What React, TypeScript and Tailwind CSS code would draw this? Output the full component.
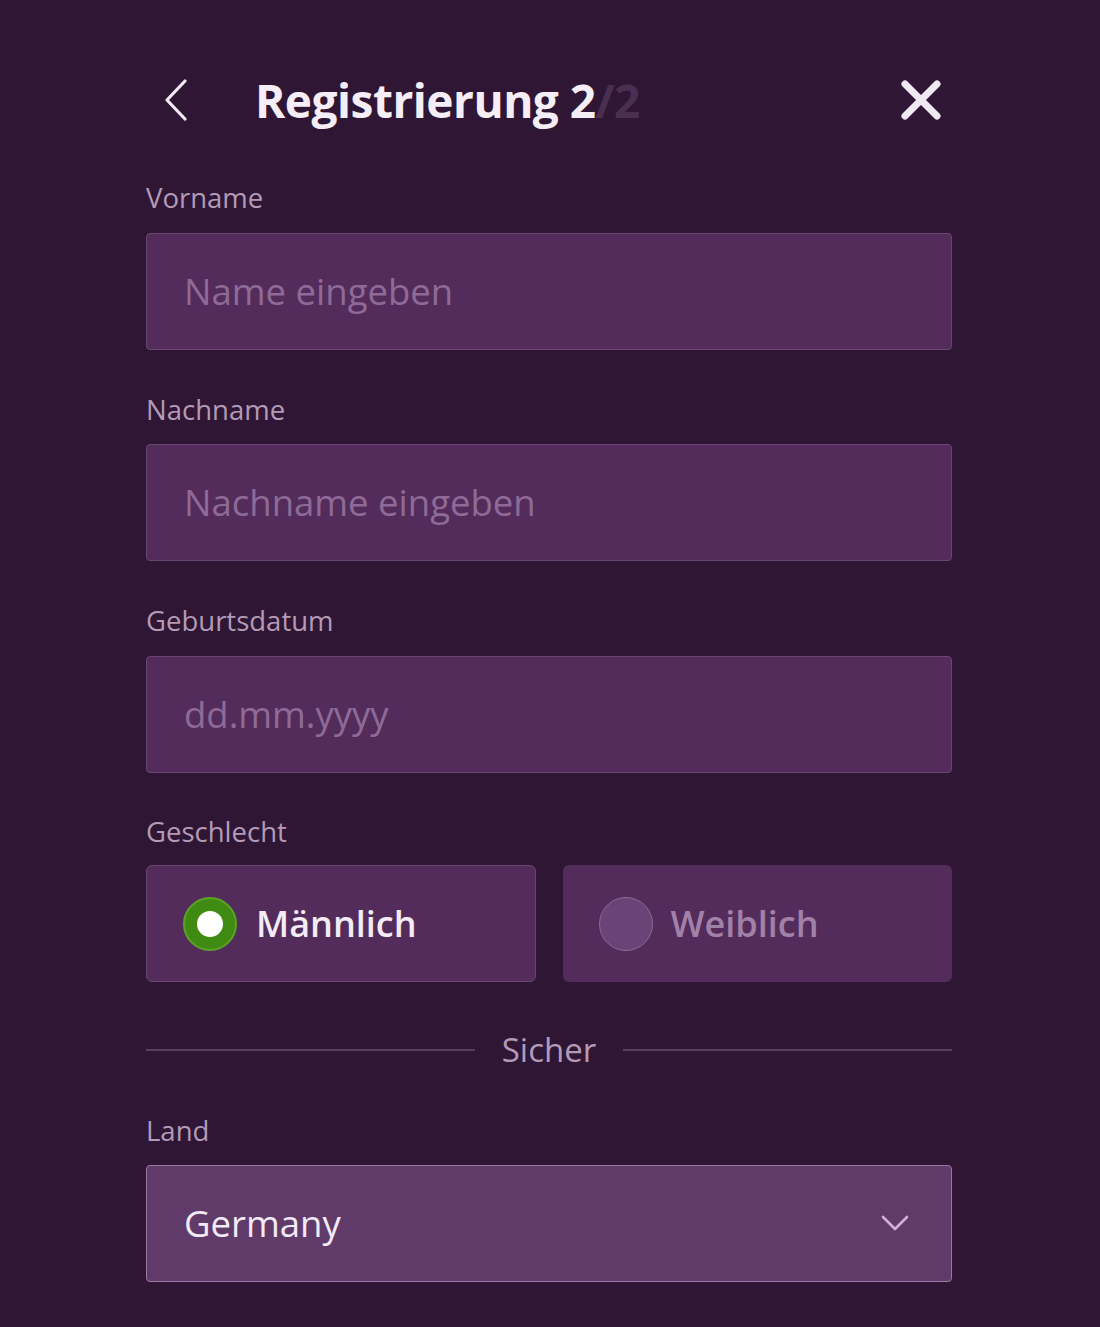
function Label({ children }: { children: React.ReactNode }) {
  return (
    <label className="block text-[27.5px] leading-none text-[#b39bb7]">
      {children}
    </label>
  )
}

function Field({ label, placeholder }: { label: string; placeholder: string }) {
  return (
    <div className="flex flex-col gap-[21px]">
      <Label>{label}</Label>
      <div className="flex h-[117px] items-center rounded-[4px] border border-[#6a4672] bg-[#532c5b] px-[37px]">
        <span className="text-[36.5px] text-[#8e6b97]">{placeholder}</span>
      </div>
    </div>
  )
}

export default function App() {
  return (
    <div
      className="min-h-screen w-full bg-[#2f1634]"
      style={{ fontFamily: '"Open Sans", "Noto Sans", sans-serif' }}
    >
      <div className="ml-[146px] flex w-[806px] flex-col pt-[70px]">
        <header className="flex h-[60px] items-center">
          <svg className="ml-[17px]" width="26" height="44" viewBox="0 0 26 44">
            <path
              d="M22 3 L4 22 L22 41"
              fill="none"
              stroke="#f1e9f2"
              strokeWidth="3.2"
              strokeLinecap="round"
              strokeLinejoin="round"
            />
          </svg>
          <h1 className="ml-[66px] text-[46px] font-bold tracking-[-0.5px] text-[#f5eef6]">
            Registrierung 2<span className="text-[#4b2f52]">/2</span>
          </h1>
          <svg
            className="ml-auto mr-[10px]"
            width="42"
            height="42"
            viewBox="0 0 42 42"
          >
            <path
              d="M5 5 L37 37 M37 5 L5 37"
              stroke="#f1e9f2"
              strokeWidth="7"
              strokeLinecap="round"
            />
          </svg>
        </header>

        <div className="mt-[54px] flex flex-col gap-[46px]">
          <Field label="Vorname" placeholder="Name eingeben" />
          <Field label="Nachname" placeholder="Nachname eingeben" />
          <Field label="Geburtsdatum" placeholder="dd.mm.yyyy" />

          <div className="-mt-[1px] flex flex-col gap-[20px]">
            <Label>Geschlecht</Label>
            <div className="grid grid-cols-2 gap-[27px]">
              <div className="flex h-[117px] items-center rounded-[6px] border border-[#6a4672] bg-[#532c5b] pl-[36px]">
                <span className="flex h-[54px] w-[54px] items-center justify-center rounded-full border-[2px] border-[#5aa524] bg-[#3f8a12]">
                  <span className="h-[26px] w-[26px] rounded-full bg-white" />
                </span>
                <span className="ml-[19px] text-[36px] font-semibold text-[#f3ebf5]">
                  Männlich
                </span>
              </div>
              <div className="flex h-[117px] items-center rounded-[6px] bg-[#532c5b] pl-[36px]">
                <span className="h-[54px] w-[54px] rounded-full border border-[#8c6a95] bg-[#6b4477]" />
                <span className="ml-[18px] text-[36px] font-semibold text-[#a281a9]">
                  Weiblich
                </span>
              </div>
            </div>
          </div>

          <div className="mt-[5px] flex items-center">
            <div className="h-[2px] flex-1 bg-[#5b3d63]" />
            <span className="px-[27px] text-[33px] leading-none text-[#b39bb7]">
              Sicher
            </span>
            <div className="h-[2px] flex-1 bg-[#5b3d63]" />
          </div>

          <div className="mt-[5px] flex flex-col gap-[20px]">
            <Label>Land</Label>
            <div className="flex h-[117px] items-center rounded-[4px] border border-[#9a78a1] bg-[#603a69] pl-[37px] pr-[41px]">
              <span className="text-[36.5px] text-[#f4eaf6]">Germany</span>
              <svg className="ml-auto" width="30" height="18" viewBox="0 0 30 18">
                <path
                  d="M3 3 L15 15 L27 3"
                  fill="none"
                  stroke="#d2aeda"
                  strokeWidth="2.6"
                  strokeLinecap="round"
                  strokeLinejoin="round"
                />
              </svg>
            </div>
          </div>
        </div>
      </div>
    </div>
  )
}
